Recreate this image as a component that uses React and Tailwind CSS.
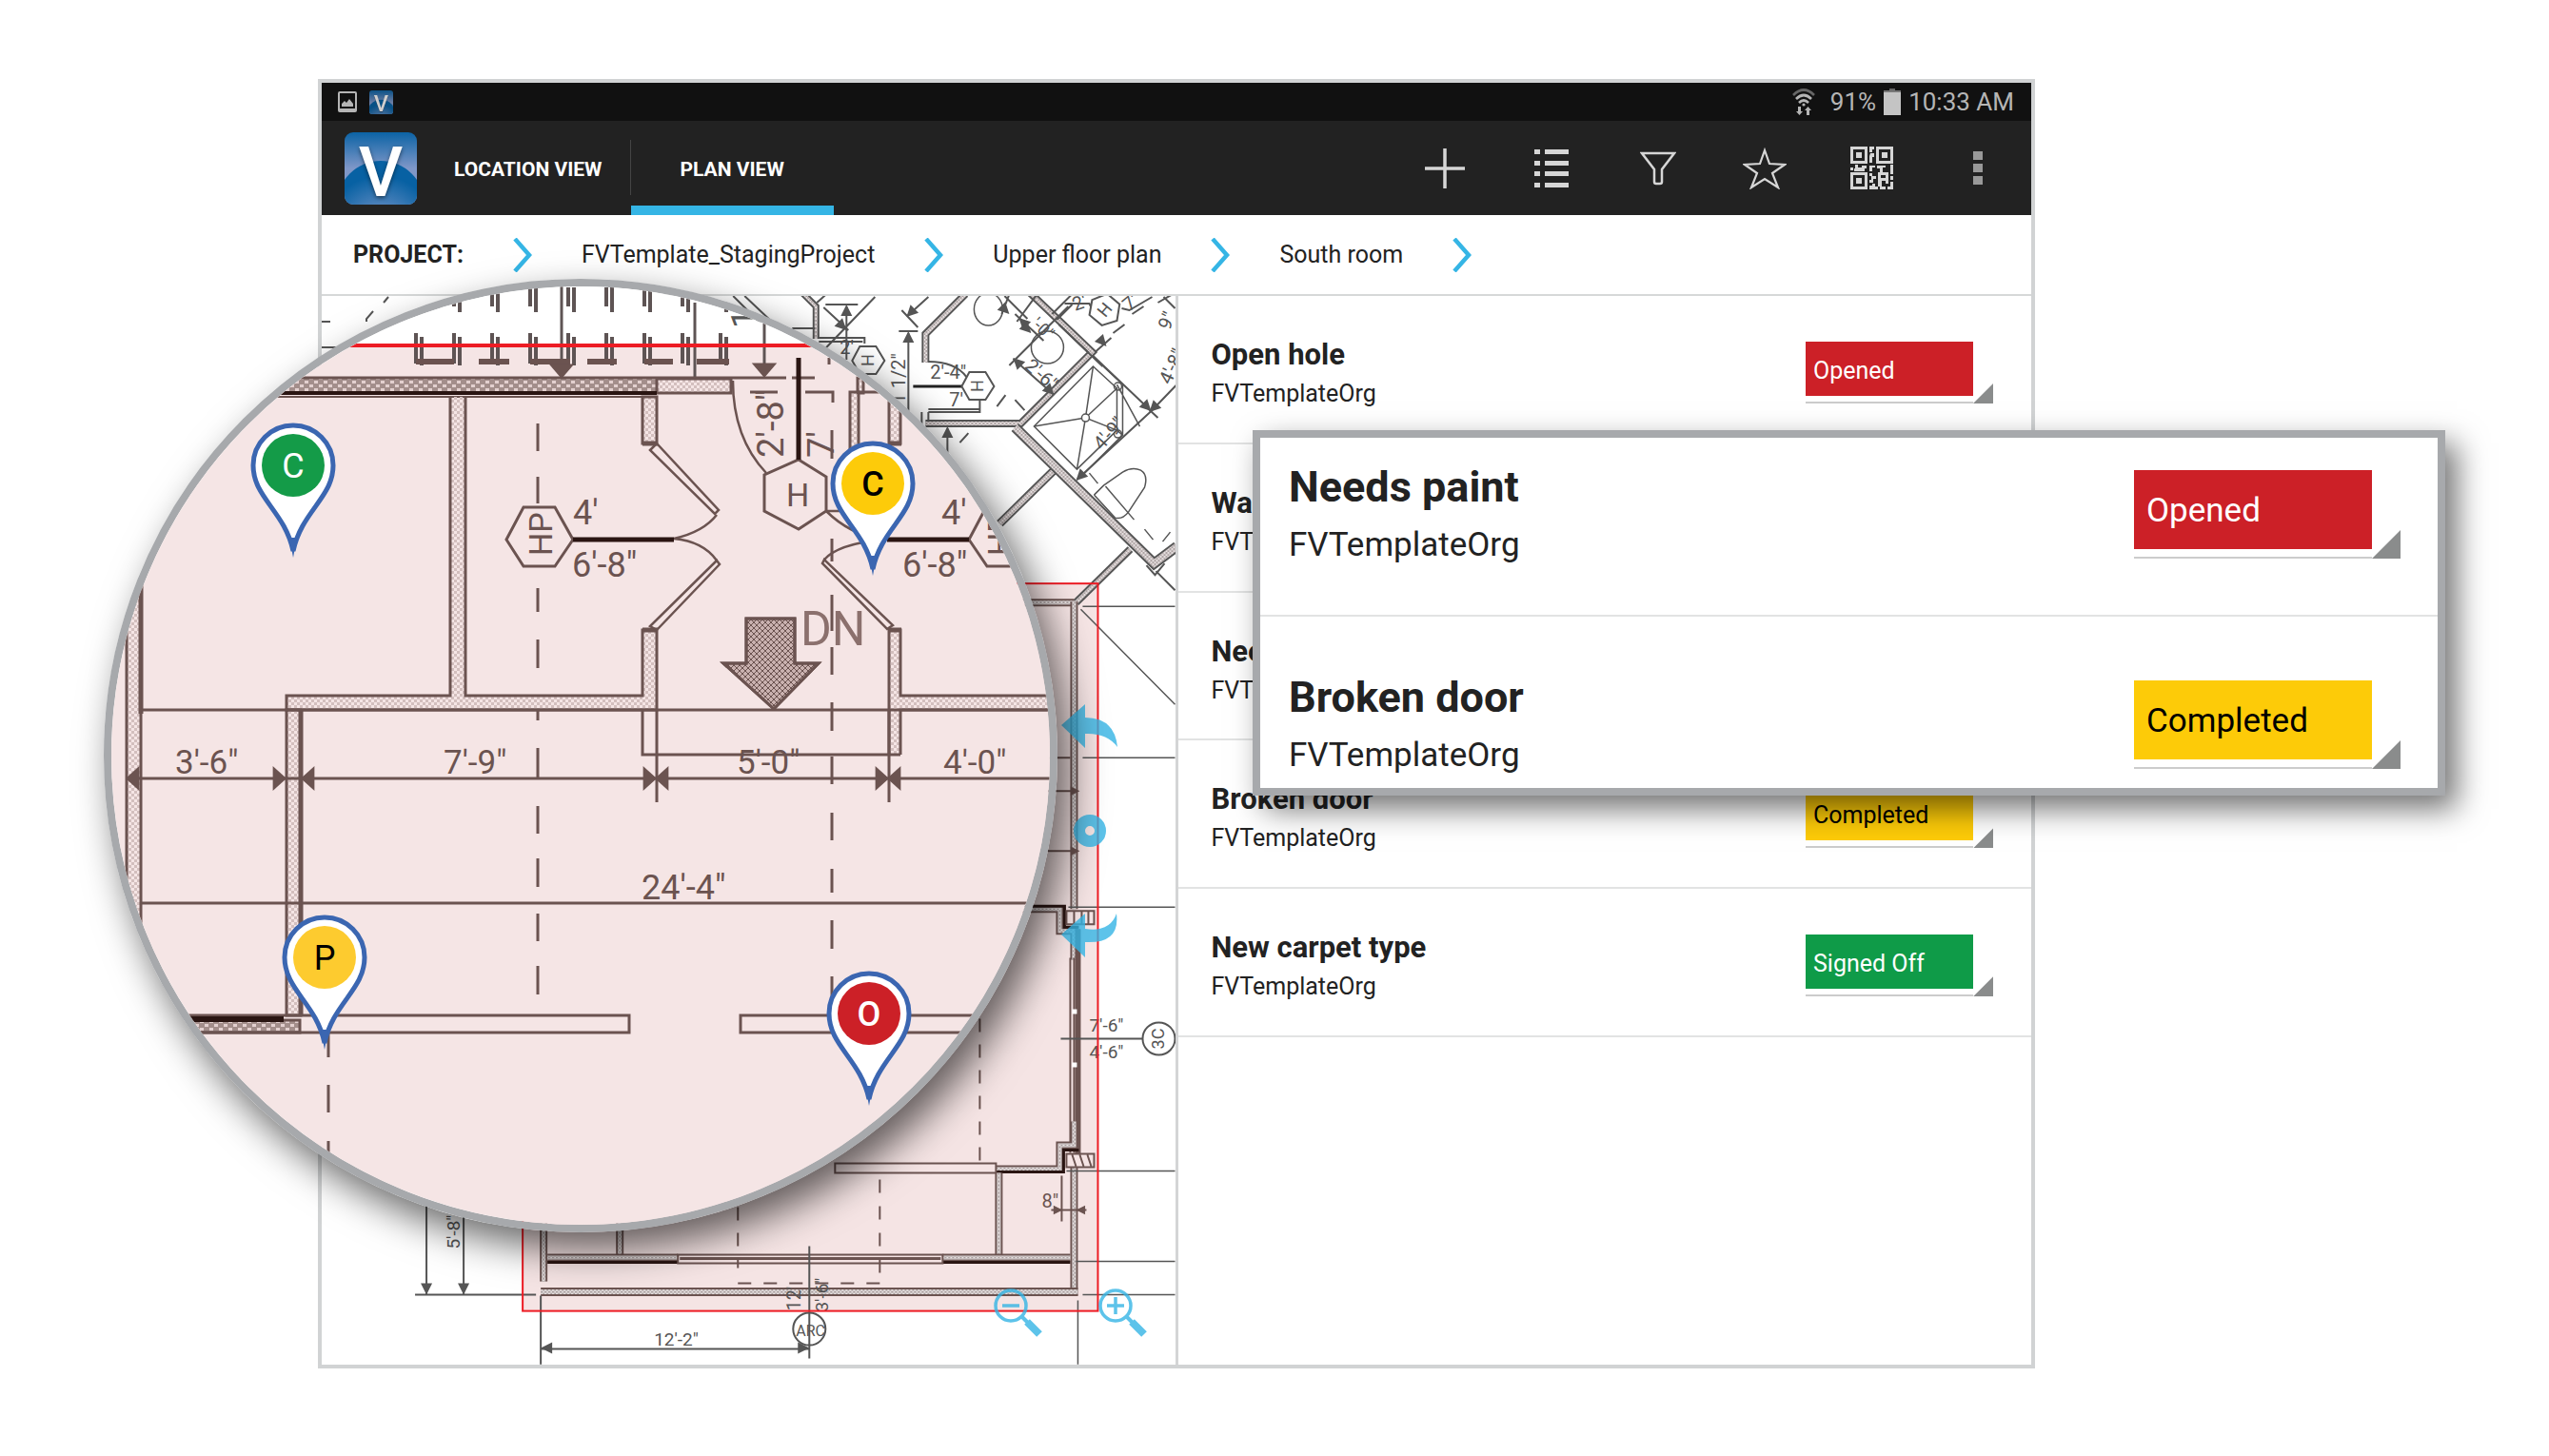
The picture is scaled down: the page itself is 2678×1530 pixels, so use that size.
// src/App.jsx
const STATUS_STYLES = {
  Opened: "bg-[#cc2027] text-white",
  Completed: "bg-[#fdcb08] text-black",
  "Signed Off": "bg-[#0f9b48] text-white",
};

const issues = [
  { id: 1, title: "Open hole", org: "FVTemplateOrg", status: "Opened" },
  { id: 2, title: "Wall", org: "FVTemplateOrg", status: "Opened" },
  { id: 3, title: "Needs paint", org: "FVTemplateOrg", status: "Opened" },
  { id: 4, title: "Broken door", org: "FVTemplateOrg", status: "Completed" },
  { id: 5, title: "New carpet type", org: "FVTemplateOrg", status: "Signed Off" },
];

const crumbs = ["FVTemplate_StagingProject", "Upper floor plan", "South room"];

const INK = "#555555";
const WARM = "#6b5350";
const DARK = "#2a1512";

/* ---------- icons ---------- */

const Logo = ({ id, className }) => (
  <svg viewBox="0 0 76 76" className={className}>
    <defs>
      <linearGradient id={`${id}-sky`} x1="0" y1="0" x2="0" y2="1">
        <stop offset="0" stopColor="#0b63a5" />
        <stop offset="0.5" stopColor="#7f97c8" />
      </linearGradient>
      <radialGradient id={`${id}-hill`} cx="0.5" cy="0.8" r="0.7">
        <stop offset="0" stopColor="#8c9fd0" />
        <stop offset="0.9" stopColor="#0761a3" />
      </radialGradient>
      <clipPath id={`${id}-clip`}>
        <rect width="76" height="76" rx="9" />
      </clipPath>
    </defs>
    <g clipPath={`url(#${id}-clip)`}>
      <rect width="76" height="76" fill={`url(#${id}-sky)`} />
      <circle cx="38" cy="76" r="46" fill={`url(#${id}-hill)`} />
    </g>
    <text x="38" y="67" textAnchor="middle" fontSize="72" fontWeight="500" fill="#fff" className="drop-shadow-[0_2px_2px_rgba(0,0,0,0.5)]">
      V
    </text>
  </svg>
);

const PictureIcon = () => (
  <svg viewBox="0 0 22 24" className="h-6 w-[22px]">
    <path d="M3 1h16a2 2 0 0 1 2 2v18a2 2 0 0 1-2 2H3a2 2 0 0 1-2-2V3a2 2 0 0 1 2-2zm0 2v16h16V3z" fill="#b5b5b5" fillRule="evenodd" />
    <path d="M5 17v-3l3-3 2 2 3-4 4 5v3z" fill="#b5b5b5" />
  </svg>
);

const WifiIcon = () => (
  <svg viewBox="0 0 24 28" className="h-7 w-6" fill="none" strokeWidth="2.6">
    <path d="M1 7Q12-4 23 7" stroke="#666" />
    <path d="M4 11Q12 3 20 11" stroke="#b5b5b5" />
    <path d="M7 15Q12 10 17 15" stroke="#b5b5b5" />
    <circle cx="12" cy="17" r="1.6" fill="#b5b5b5" />
    <path d="M6 19h3v5h2l-3.500 4-3.500-4h2zM15 28h3v-5h2l-3.500-4-3.500 4h2z" fill="#b5b5b5" />
  </svg>
);

const BatteryIcon = () => (
  <svg viewBox="0 0 18 28" className="h-7 w-[18px]">
    <path d="M6 0h6v3H6z" fill="#666" />
    <path d="M0 2h18v3H0z" fill="#777" />
    <path d="M0 4h18v24H0z" fill="#c4c4c4" />
  </svg>
);

const PlusIcon = () => (
  <svg viewBox="0 0 42 42" className="size-[42px]">
    <path d="M21 0v42M0 21h42" stroke="#d6d6d6" strokeWidth="3.500" />
  </svg>
);

const ListIcon = () => (
  <svg viewBox="0 0 36 42" className="h-[42px] w-9" fill="#d6d6d6">
    {[1, 13, 24, 36].map((y) => (
      <g key={y}>
        <rect x="0" y={y} width="6" height="5" />
        <rect x="11" y={y} width="25" height="5" />
      </g>
    ))}
  </svg>
);

const FilterIcon = () => (
  <svg viewBox="0 0 38 36" className="h-9 w-[38px]">
    <path d="M2 2h34L23 19v13q0 2-2 2h-4q-2 0-2-2V19z" fill="none" stroke="#d6d6d6" strokeWidth="2.500" />
  </svg>
);

const StarIcon = () => (
  <svg viewBox="0 0 46 44" className="h-11 w-[46px]">
    <path d="M23 3l5 14 16 1-13 9 6 15-14-9-14 9 6-15L2 18l16-1z" fill="none" stroke="#d6d6d6" strokeWidth="2.200" />
  </svg>
);

const QrIcon = () => (
  <svg viewBox="0 0 45 45" className="size-[45px]" fill="#d6d6d6">
    {[[0, 0], [27, 0], [0, 27]].map(([x, y]) => (
      <g key={`${x}-${y}`} transform={`translate(${x} ${y})`}>
        <path d="M0 0h18v18H0zM3 3v12h12V3z" fillRule="evenodd" />
        <rect x="6" y="6" width="6" height="6" />
      </g>
    ))}
    <path d="M20 0h5v3h-2v3h-3zM21 7h4v4h-2v6h-3v-7zM0 22h3v3H0zM5 19h3v3h4v-2h5v3h-2v3H4v-3h1zM20 20h6v2h-3v4h-3zM28 20h9v2h-3v5h-3v-4h-3zM42 19h3v10h-3zM20 28h3v3h4v3h-3v4h-4v-3h2v-4h-2zM29 27h11v12h-3v-3h-4v6h-4zM32 30v3h5v-3zM42 31h3v4h-3zM20 41h3v-2h3v3h3v3H20zM31 42h6v3h-6zM39 42h3v-5h3v8h-6z" fillRule="evenodd" />
  </svg>
);

const MoreIcon = () => (
  <svg viewBox="0 0 10 36" className="h-9 w-2.5" fill="#999">
    <path d="M0 0h10v9H0zM0 13h10v9H0zM0 26h10v9H0z" />
  </svg>
);

const Chevron = () => (
  <svg viewBox="0 0 20 36" className="h-9 w-5 shrink-0">
    <path d="M2 1l15 17L2 35" fill="none" stroke="#35b5e5" strokeWidth="4.500" />
  </svg>
);

const ZoomIcon = ({ plus }) => (
  <svg viewBox="0 0 52 52" className="size-[52px]" fill="none" stroke="#35b5e5">
    <circle cx="18" cy="18" r="16" strokeWidth="3.500" />
    <path d={plus ? "M9 18h18M18 9v18" : "M9 18h18"} strokeWidth="3.500" />
    <path d="M30 30l6 6" strokeWidth="4" />
    <path d="M35 35l13 13" strokeWidth="8" />
  </svg>
);

/* ---------- drawing parts ---------- */

const Wall = ({ d, w = 8, ink = INK }) => (
  <g fill="none">
    <path d={d} stroke={ink} strokeWidth={w} />
    <path d={d} stroke="#eae4e4" strokeWidth={w - 4} />
    <path d={d} stroke="url(#hatch)" strokeWidth={w - 4} />
  </g>
);

const Label = ({ x, y, size = 20, turn = 0, fill = INK, children }) => (
  <text x={x} y={y} fontSize={size} fill={fill} stroke="none" transform={`rotate(${turn} ${x} ${y})`}>
    {children}
  </text>
);

// triangle arrowhead with its tip on x,y
const Tip = ({ x, y, turn = 0, s = 1, wide = 1, fill = INK }) => (
  <path d="M0 0L-12 -6V6z" fill={fill} stroke="none" transform={`translate(${x} ${y}) rotate(${turn}) scale(${s} ${s * wide})`} />
);

const Hex = ({ x, y, turn = 0 }) => (
  <g transform={`rotate(${turn} ${x} ${y})`}>
    <path d={`M${x - 17} ${y}l8-15h17l9 15-9 14h-17z`} fill="#fff" />
    <Label x={x + 6} y={y + 6} size={18} turn={-90}>H</Label>
  </g>
);

const Pin = ({ x, y, color, letter, text = "#fff", bold = 400 }) => (
  <g transform={`translate(${x} ${y})`}>
    <path d="M0 90C-9 48-42 34-42 0A42 42 0 1 1 42 0C42 34 9 48 0 90z" fill="#fff" stroke="#3b66b1" strokeWidth="5" />
    <path d="M-4 76L0 97 4 76z" fill="#3b66b1" />
    <circle r="33" fill={color} />
    <text y="13" textAnchor="middle" fontSize="36" fontWeight={bold} fill={text}>{letter}</text>
  </g>
);

const FloorPlan = () => (
  <svg viewBox="338 311 896 1122" className="block w-full" stroke={INK} strokeWidth="2" fill="none">
    <defs>
      <pattern id="hatch" width="4" height="4" patternUnits="userSpaceOnUse">
        <path d="M0 0h2v2H0zM2 2h2v2H2z" fill="#aaa0a0" stroke="none" />
      </pattern>
    </defs>
    <rect x="549" y="613" width="604" height="764" fill="#f5e4e4" stroke="none" />

    {/* upper left corner */}
    <path d="M408 312l-5 6M392 327l-7 8v3M338 338h9M338 365h18" />

    {/* rooms above the slab */}
    <path d="M770 311l40 40M782 311l36 34" />
    <Wall d="M843 308l14 14v34" w={7} />
    <path d="M858 318l10-9M832 345h24M860 355h48v6M860 359h46M867 320h34M889 322v56M919 312l-52 54M865 323l26 24" />
    <Tip x={889} y={320} turn={-90} />
    <Tip x={889} y={347} turn={45} />
    <Label x={882} y={372}>2'</Label>
    <Hex x={912} y={379} />
    <path d="M975 312l-22 20M947 326l17 18M944 348h20M954 350v90" />
    <Tip x={952} y={333} turn={135} />
    <Tip x={954} y={348} turn={-90} />
    <Label x={951} y={430} turn={-90}>-1 1/2"</Label>
    <Wall d="M1014 309l-42 42v30" w={8} />
    <path d="M975 380q28 0 40 16" />
    <ellipse cx="1038" cy="325" rx="15" ry="17" strokeWidth="1.500" />
    <path d="M959 406h52" stroke="#222" strokeWidth="3" />
    <Label x={977} y={398}>2'-4"</Label>
    <Label x={997} y={427}>7'</Label>
    <Hex x={1027} y={406} />
    <path d="M1029 421v12h-54M975 430h54M968 433v20M975 433v8" />
    <Wall d="M1107 494l-57 56" w={9} />
    <Wall d="M972 445h100l75-75-65-62" w={8} />
    <path d="M1110 336l16-16M1105 330l24-24" />
    <path d="M1055 311l24 24M1062 304l-10 26M1066 330l30 28M1064 377l43 38M1060 384l62-62M1068 338l22-30" />
    <Tip x={1064} y={376} turn={-135} />
    <Tip x={1107} y={415} turn={45} />
    <Tip x={1070} y={334} turn={-135} />
    <Tip x={1083} y={350} turn={45} />
    <Tip x={1060} y={330} turn={45} />
    <Label x={1082} y={342} size={18} turn={42}>'-0"</Label>
    <Label x={1075} y={386} turn={42}>2'-6"</Label>
    <circle cx="1100" cy="365" r="17" strokeWidth="1.500" />
    <path d="M1047 427l9-12M1066 420l10 11M1008 465l9-10M995 450v26" />
    <Tip x={995} y={448} turn={-90} />
    <path d="M1112 341l46 44M1118 319h26l4 8M1178 324l8 2 24-14M1189 330l12-8M1169 350l12-9M1150 370l17-15M1222 312l12 12M1216 318l14-8" />
    <Hex x={1160} y={326} turn={40} />
    <Tip x={1162} y={364} turn={48} />
    <Label x={1129} y={327} turn={-20}>2'</Label>
    <Label x={1186} y={328} turn={-40}>7'</Label>
    <Label x={1228} y={348} turn={-65}>9"</Label>
    <Label x={1229} y={405} turn={-65}>4'-8"</Label>

    {/* shower */}
    <g strokeWidth="1.500">
      <path d="M1148 385l25 23v44l-42 41-45-45z" />
      <path d="M1148 385l-8 54 33-31M1173 452l-33-13-9 54M1086 448l54-9" />
      <path d="M1150 377l29 27v53l-45 45M1173 404l24 44M1179 457l-6-5" />
      <circle cx="1140" cy="439" r="4" fill="#fff" />
      <circle cx="1174" cy="456" r="4" />
      <circle cx="1174" cy="406" r="4" />
    </g>
    <path d="M1148 374l61 58-78 72M1209 432l26-27M1200 424l16 15" />
    <Tip x={1209} y={432} turn={45} />
    <Tip x={1207} y={433} turn={135} />
    <Tip x={1130} y={505} turn={135} />
    <Label x={1157} y={474} turn={-48}>4'-9"</Label>

    {/* toilet */}
    <path d="M1149 520l10-10 20-14q10-6 19-2 8 5 4 18l-17 26q-6 8-14 6l-22-24M1161 511l30 35M1144 497l9 11M1202 556l9 11M1221 569l8-10" strokeWidth="1.500" />
    <Wall d="M1066 449l146 143 24-18" w={11} />
    <path d="M1204 594l9 10 10-12M1214 600l20 20" />

    {/* slab outline */}
    <g stroke={WARM}>
      <Wall d="M1187 577l-57 56" w={8} />
      <Wall d="M1060 633h68" w={8} ink={WARM} />
      <Wall d="M1128 632v323" w={8} ink={WARM} />
      <Wall d="M1128 1226v135" w={8} ink={WARM} />
      <path d="M1100 796h24M1100 831h30M1100 894h30" />
      <Tip x={1134} y={831} s={0.8} fill={WARM} />
      <Tip x={1134} y={894} s={0.8} fill={WARM} />
      <Wall d="M1070 955h43v23h15v30" w={8} ink={WARM} />
      <path d="M1080 952h38v22h15" stroke={DARK} strokeWidth="3" />
      <path d="M1120 957h29v14h-29zM1128 957v14M1136 957v14M1143 957v14" />
      <path d="M1124 1006v205M1128 1006v205" />
      <path d="M1132 976v236" strokeWidth="6" />
      <path d="M1126 1060h5v5h-5zM1126 1116h5v5h-5z" fill="#fff" stroke="none" />
      <Wall d="M1128 1178v25h-15v25h-67" w={8} ink={WARM} />
      <path d="M1046 1231h71v-23h16" stroke={DARK} strokeWidth="3" />
      <path d="M1120 1212h29v14h-29zM1126 1213l4 12M1134 1213l4 12M1142 1213l4 12" />
      <path d="M877 1222h169v10H877z" />
      <Wall d="M1049 1232v86" w={8} ink={WARM} />
      <path d="M1115 1235v48M1104 1271h37" />
      <Tip x={1116} y={1271} s={0.8} fill={WARM} />
      <Tip x={1130} y={1271} turn={180} s={0.8} fill={WARM} />
      <Label x={1094} y={1268} fill={WARM}>8"</Label>
      <path d="M1029 1070v152" strokeDasharray="14 13" />
      <path d="M924 1239v98" strokeDasharray="14 14" />
      <path d="M775 1268v64M775 1348h150" strokeDasharray="14 13" />
      <Wall d="M571 1280v66" w={8} ink={WARM} />
      <Wall d="M651 1280v38" w={8} ink={WARM} />
      <Wall d="M575 1321h137M990 1321h134" w={8} ink={WARM} />
      <path d="M575 1326h137M990 1326h134" stroke={DARK} strokeWidth="3" />
      <path d="M712 1318h278v9H712z" />
      <path d="M714 1322h274" strokeWidth="3" />
      <Wall d="M568 1357h564" w={9} ink={WARM} />
    </g>

    {/* extension lines */}
    <path d="M1137 637h97M1137 796h97M1122 953h112M1120 1230h114M1130 1325h104M1137 1360h97M1135 640l99 100M1132 1366v67" strokeWidth="1.500" />
    <path d="M1114 1091h86" />
    <circle cx="1217" cy="1091" r="17" />
    <Label x={1223} y={1102} size={18} turn={-90}>3C</Label>
    <Label x={1144} y={1084} size={19}>7'-6"</Label>
    <Label x={1144} y={1112} size={19}>4'-6"</Label>

    {/* bottom dimensions */}
    <path d="M448 1260v99M487 1278v81M436 1360h127M568 1361v72M568 1417h282M850 1309v118" />
    <Tip x={448} y={1360} turn={90} />
    <Tip x={487} y={1360} turn={90} />
    <Tip x={568} y={1416} turn={180} />
    <Tip x={850} y={1416} />
    <Label x={483} y={1312} size={19} turn={-90}>5'-8"</Label>
    <Label x={687} y={1413} size={19}>12'-2"</Label>
    <circle cx="850" cy="1396" r="17" />
    <Label x={836} y={1403} size={16}>ARC</Label>
    <Label x={841} y={1377} turn={-90}>12'</Label>
    <Label x={870} y={1378} size={19} turn={-90}>3'-6"</Label>

    <rect x="549" y="613" width="604" height="764" stroke="#ed1c24" />
  </svg>
);

const stairs = [437, 477, 517, 557, 597, 637, 677, 717, 757];

// [x, turn] of the arrowheads along the dimension line
const tips = [
  [132, 180],
  [301, 0],
  [316, 180],
  [690, 0],
  [688, 180],
  [934, 0],
  [932, 180],
];

const MagnifiedPlan = () => (
  <svg viewBox="117 301 986 986" className="block size-full" stroke={WARM} strokeWidth="3" fill="none">
    <defs>
      <pattern id="weave" width="6" height="6" patternUnits="userSpaceOnUse">
        <path d="M0 0h3v3H0zM3 3h3v3H3z" fill="#d3bfbe" stroke="none" />
      </pattern>
      <pattern id="brick" width="10" height="8" patternUnits="userSpaceOnUse">
        <path d="M0 0h10v8H0z" fill="#a38e8b" stroke="none" />
        <path d="M0 0h4v3H0zM5 4h4v3H5z" fill="#e3d0cf" stroke="none" />
      </pattern>
      <pattern id="mesh" width="6" height="6" patternUnits="userSpaceOnUse">
        <path d="M0 0l6 6M6 0L0 6" stroke="#6b5350" strokeWidth="1" />
      </pattern>
    </defs>
    <rect x="109" y="293" width="1002" height="70" fill="#fff" stroke="none" />
    <rect x="109" y="363" width="1002" height="932" fill="#f5e5e5" stroke="none" />

    {/* stairs */}
    <g stroke="#5e5454">
      {stairs.map((x) => (
        <path key={x} d={`M${x} 302v20M${x + 6} 302v26M${x} 350v32M${x + 6} 354v30`} strokeWidth="4" />
      ))}
      <path d="M590 301v85M730 318v79M803 340v46" />
    </g>
    <path d="M437 380h40M503 380h32M557 380h42M617 380h31M677 380h30M732 380h34" strokeWidth="6" />
    <Tip x={590} y={398} turn={90} s={1.3} wide={1.7} fill={WARM} />
    <Tip x={803} y={397} turn={90} s={1.3} wide={1.7} fill={WARM} />
    <Label x={794} y={345} size={36} turn={-90}>1</Label>
    <path d="M109 363h1002" stroke="#ed1c24" strokeWidth="4" />

    {/* top wall */}
    <rect x="240" y="398" width="450" height="15" fill="url(#brick)" stroke="none" />
    <rect x="690" y="398" width="78" height="15" fill="url(#weave)" />
    <path d="M240 397h586M832 397h24M788 412h29M846 412h29v11M871 376v7" />
    <path d="M240 413h450" stroke={DARK} strokeWidth="4" />
    <path d="M240 417h450" strokeWidth="2" />

    {/* walls */}
    <g fill="url(#weave)">
      <rect x="133" y="560" width="15" height="440" />
      <path d="M473 417v314h-172v15h389V662h-15v69H489V417" />
      <rect x="301" y="746" width="15" height="321" />
      <rect x="675" y="417" width="15" height="49" />
      <rect x="934" y="412" width="12" height="54" />
      <path d="M934 793V662h12v69h160v15H946v47" />
      <rect x="901" y="397" width="6" height="16" />
      <rect x="893" y="412" width="9" height="70" />
    </g>
    <path d="M675 466h16M933 466h14M675 662h16M933 662h14M316 746v321M148 560v190" strokeWidth="5" />
    <path d="M902 412h36M148 746h955M675 746v47h271M690 746v97M934 746v97" />
    <path d="M149 949h940M133 818h975" />

    {/* dashed center lines */}
    <path d="M565 445v29M565 501v28M565 618v25M565 672v30M565 747v10M565 786v31M565 847v29M565 902v30M565 960v29M565 1015v30" />
    <path d="M874 452v30M874 566v24M874 625v38M874 680v29M874 738v30M874 795v29M874 854v29M874 913v25M874 967v30M874 1026v24" />
    <path d="M345 1085v26M345 1140v29M345 1199v20" />

    {/* doors */}
    <g strokeWidth="2.500">
      <path d="M683 473l7-7 65 70-4 4z" />
      <path d="M753 541q-14 18-45 25 31 3 45 23" />
      <path d="M753 589l3 4-66 69-7-4z" />
      <path d="M866 588l-2 4 68 69 6-4z" />
      <path d="M866 588q14-16 60-21-34-6-58-30M868 537h30" />
      <path d="M770 400q0 60 35 97" />
    </g>

    {/* hex tags */}
    <path d="M532 567l18-34h33l19 34-19 28h-33z" />
    <path d="M1018 567l18-34h40M1018 567l19 28h40" />
    <path d="M839 483l29 18v36l-29 19-36-19v-38z" />
    <path d="M602 567h106M932 567h86" stroke={DARK} strokeWidth="5" />
    <path d="M839 376v107" stroke={DARK} strokeWidth="5" />
    <Label x={580} y={584} size={34} turn={-90} fill={WARM}>HP</Label>
    <Label x={1062} y={584} size={34} turn={-90} fill={WARM}>HP</Label>
    <Label x={826} y={532} size={34} fill={WARM}>H</Label>
    <Label x={823} y={481} size={38} turn={-90} fill={WARM}>2'-8"</Label>
    <Label x={876} y={481} size={38} turn={-90} fill={WARM}>7'</Label>
    <Label x={602} y={551} size={36} fill={WARM}>4'</Label>
    <Label x={601} y={606} size={36} fill={WARM}>6'-8"</Label>
    <Label x={989} y={551} size={36} fill={WARM}>4'</Label>
    <Label x={948} y={606} size={36} fill={WARM}>6'-8"</Label>
    <g className="font-['Liberation_Sans_Narrow',Roboto,sans-serif]">
      <Label x={841} y={678} size={50} fill="#8b706d">DN</Label>
    </g>
    <Label x={184} y={813} size={35} fill={WARM}>3'-6"</Label>
    <Label x={466} y={813} size={35} fill={WARM}>7'-9"</Label>
    <Label x={774} y={813} size={35} fill={WARM}>5'-0"</Label>
    <Label x={991} y={813} size={35} fill={WARM}>4'-0"</Label>
    <Label x={674} y={945} size={36} fill={WARM}>24'-4"</Label>

    {/* stair arrow */}
    <path d="M784 650h51v47h25l-47 48-53-48h24z" fill="#c9b1af" />
    <path d="M784 650h51v47h25l-47 48-53-48h24z" fill="url(#mesh)" />

    {tips.map(([x, turn]) => (
      <Tip key={x} x={x} y={818} turn={turn} s={1.2} wide={1.8} fill={WARM} />
    ))}

    {/* lower wall */}
    <rect x="180" y="1072" width="135" height="13" fill="url(#brick)" />
    <path d="M180 1067h481v18H180M778 1067h280v18H778z" />
    <path d="M180 1071h118" stroke={DARK} strokeWidth="6" />

    <g stroke="none">
      <Pin x={308} y={489} color="#149b48" letter="C" />
      <Pin x={917} y={508} color="#fdcb0a" letter="C" text="#000" bold={500} />
      <Pin x={341} y={1006} color="#fdcb2f" letter="P" text="#000" />
      <Pin x={913} y={1065} color="#cc2027" letter="O" bold={500} />
    </g>
  </svg>
);

/* ---------- layout ---------- */

const StatusBar = () => (
  <div className="flex h-10 items-center justify-between bg-[#111] pr-[18px] pl-4 text-[#b5b5b5]">
    <div className="flex items-center gap-3">
      <PictureIcon />
      <Logo id="small" className="size-[25px] opacity-80" />
    </div>
    <div className="flex items-center gap-2 text-[26px] leading-10">
      <WifiIcon />
      <span className="ml-2">91%</span>
      <BatteryIcon />
      <span>10:33 AM</span>
    </div>
  </div>
);

const Header = () => {
  const actions = [
    ["Add", PlusIcon],
    ["List", ListIcon],
    ["Filter", FilterIcon],
    ["Favourites", StarIcon],
    ["Scan code", QrIcon],
    ["More", MoreIcon],
  ];

  return (
    <header className="flex h-[99px] items-stretch bg-[#222] pl-6 text-[21px] font-bold text-white">
      <Logo id="big" className="size-[76px] self-center" />
      <nav className="flex">
        <button className="relative pt-1 pr-[30px] pl-[39px] after:absolute after:top-5 after:right-0 after:h-[58px] after:w-px after:bg-[#444]">
          LOCATION VIEW
        </button>
        <button className="border-t-10 border-b-10 border-t-transparent border-b-[#35b5e5] px-[52px] pt-1">
          PLAN VIEW
        </button>
      </nav>
      <div className="ml-auto flex">
        {actions.map(([name, Icon]) => (
          <button key={name} aria-label={name} className="flex w-28 items-center justify-center">
            <Icon />
          </button>
        ))}
      </div>
    </header>
  );
};

const Breadcrumb = () => (
  <nav className="flex h-[85px] items-center gap-[52px] border-b-2 border-[#d6d8d8] bg-white pl-[33px] text-[25px] text-[#222]">
    <span className="font-bold">PROJECT:</span>
    <Chevron />
    {crumbs.map((name) => (
      <div key={name} className="flex items-center gap-[52px]">
        <a href="#">{name}</a>
        <Chevron />
      </div>
    ))}
  </nav>
);

const PlanControls = () => (
  <>
    <div className="absolute top-[429px] right-[60px] flex flex-col items-center gap-[70px] opacity-80">
      <button aria-label="Rotate left">
        <svg viewBox="0 0 60 46" className="h-[46px] w-[60px]" fill="#35b5e5">
          <path d="M0 22L25 0v14q31 0 34 31Q48 30 25 31v15z" />
        </svg>
      </button>
      <button aria-label="Center plan">
        <svg viewBox="0 0 34 34" className="size-[34px]">
          <circle cx="17" cy="17" r="11" fill="none" stroke="#35b5e5" strokeWidth="12" />
        </svg>
      </button>
      <button aria-label="Rotate right">
        <svg viewBox="0 0 60 46" className="h-[46px] w-[60px]" fill="#35b5e5">
          <path d="M0 22L25 0v16q26 4 33-16 4 32-33 30v16z" />
        </svg>
      </button>
    </div>
    <div className="absolute right-[29px] bottom-[28px] flex gap-[58px] opacity-80">
      <button aria-label="Zoom out"><ZoomIcon /></button>
      <button aria-label="Zoom in"><ZoomIcon plus /></button>
    </div>
  </>
);

const StatusSelect = ({ issue, large }) => (
  <div className={large ? "relative mr-[30px] border-b-2 border-[#ccc] pb-2" : "relative mr-[21px] border-b-2 border-[#ccc] pb-[6px]"}>
    <select
      aria-label={`Status of ${issue.title}`}
      defaultValue={issue.status}
      className={`block appearance-none ${large ? "h-[83px] w-[250px] pt-1 pl-[13px] text-[35px]" : "h-[57px] w-44 pt-1 pl-2 text-[25px]"} ${STATUS_STYLES[issue.status]}`}
    >
      {Object.keys(STATUS_STYLES).map((name) => (
        <option key={name}>{name}</option>
      ))}
    </select>
    <span
      className={`absolute -bottom-0.5 bg-[#8a8c8c] [clip-path:polygon(100%_0,100%_100%,0_100%)] ${large ? "-right-[30px] size-[30px]" : "-right-[21px] size-[21px]"}`}
    />
  </div>
);

const IssueRow = ({ issue }) => (
  <li className="flex items-start justify-between border-b-2 border-[#e2e3e3] pt-12 pr-10 pl-[35px] text-[#222]">
    <div>
      <h3 className="text-[31px] leading-7 font-bold">{issue.title}</h3>
      <p className="mt-[11px] text-[25px] leading-8">{issue.org}</p>
    </div>
    <StatusSelect issue={issue} />
  </li>
);

const IssueCallout = () => (
  <ul className="absolute top-[452px] right-[109px] w-[1253px] border-8 border-[#a7a9ac] bg-white text-[#222] shadow-[12px_14px_30px_rgba(0,0,0,0.55)]">
    {issues.slice(2, 4).map((issue, i) => (
      <li
        key={issue.id}
        className={`flex items-start justify-between pr-[39px] pl-[30px] ${i === 0 ? "h-[188px] border-b-2 border-[#e2e3e3] pt-[34px]" : "h-[180px] pt-[67px]"}`}
      >
        <div>
          <h3 className="text-[45px] leading-9 font-bold">{issue.title}</h3>
          <p className="mt-[21px] text-[35px] leading-[44px]">{issue.org}</p>
        </div>
        <StatusSelect issue={issue} large />
      </li>
    ))}
  </ul>
);

const App = () => {
  return (
    <main className="relative min-h-screen w-full bg-white pt-[83px] pr-[540px] pb-[90px] pl-[334px] font-['Roboto',sans-serif]">
      <div className="border-4 border-[#d1d3d4] bg-white">
        <StatusBar />
        <Header />
        <Breadcrumb />
        <div className="flex">
          <section className="relative flex-1">
            <FloorPlan />
            <PlanControls />
          </section>
          <div className="w-[3px] shrink-0 bg-[#d4d5d6]" />
          <ul className="grid h-[779px] flex-1 auto-rows-fr">
            {issues.map((issue) => (
              <IssueRow key={issue.id} issue={issue} />
            ))}
          </ul>
        </div>
      </div>

      {/* magnifier over the plan */}
      <div className="absolute top-[293px] left-[109px] size-[1002px] overflow-hidden rounded-full border-8 border-[#a7a9ac] shadow-[12px_18px_40px_rgba(0,0,0,0.6)]">
        <MagnifiedPlan />
      </div>

      <IssueCallout />
    </main>
  );
};

export default App;
